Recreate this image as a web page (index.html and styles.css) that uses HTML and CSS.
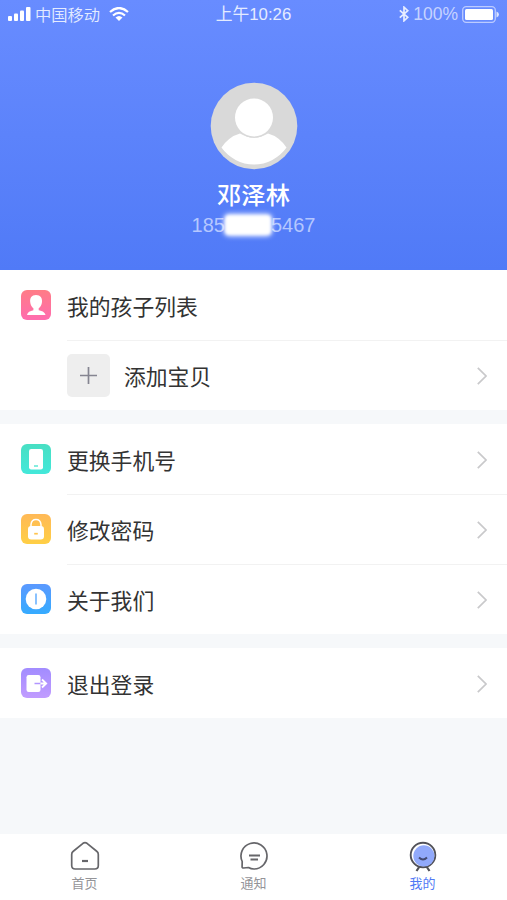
FILE: index.html
```
<!DOCTYPE html>
<html lang="zh-CN">
<head>
<meta charset="utf-8">
<title>我的</title>
<link rel="stylesheet" href="styles.css">
</head>
<body>
<div class="app">
  <header class="profile">
    <div class="status">
      <div class="status-left">
        <svg width="24" height="14" viewBox="0 0 24 14" fill="#fff"><rect x="0" y="9" width="4" height="5" rx="1"/><rect x="6" y="6.500" width="4" height="7.500" rx="1"/><rect x="12" y="3.500" width="4" height="10.500" rx="1"/><rect x="18" y="0" width="4.500" height="14" rx="1"/></svg>
        <span class="carrier">中国移动</span>
        <svg class="wifi" width="20" height="14" viewBox="0 0 20 14" fill="none" stroke="#fff" stroke-width="2.200"><path d="M1 5Q10-3 19 5"/><path d="M4 8.500Q10 3.200 16 8.500"/><path d="M6.500 10.500Q10 7.300 13.500 10.500L10 14Z" fill="#fff" stroke="none"/></svg>
      </div>
      <span class="time">上午10:26</span>
      <div class="status-right">
        <svg width="10" height="16" viewBox="0 0 10 16" fill="none" stroke="#e8eeff" stroke-width="1.700"><path d="M.8 4.300 8.800 11.300 5 14.800V1.200L8.800 4.700.8 11.700"/></svg>
        <span class="percent">100%</span>
        <svg width="37" height="17" viewBox="0 0 37 17"><rect x=".7" y=".7" width="32.600" height="15.600" rx="3.500" fill="none" stroke="#bccbff" stroke-width="1.300"/><rect x="3" y="3" width="28" height="11" rx="1.500" fill="#fff"/><path d="M34.500 5.500Q37 6.500 37 8.500T34.500 11.500Z" fill="#dce4ff"/></svg>
      </div>
    </div>
    <svg class="avatar" width="88" height="88" viewBox="0 0 88 88"><circle cx="44" cy="44" r="43.300" fill="#d9d9d9"/><path d="M11.500 65.500Q19 54.500 30 51.500Q44 60 58 51.500Q69 54.500 76.500 65.500A39.500 39.500 0 0 1 11.500 65.500Z" fill="#fff"/><circle cx="44" cy="35.500" r="20.300" fill="#d9d9d9"/><circle cx="44" cy="35.500" r="19" fill="#fff"/></svg>
    <h1 class="name">邓泽林</h1>
    <div class="phone"><span>185</span><span class="mask"></span><span>5467</span></div>
  </header>

  <main class="content">
    <section class="group">
      <div class="row">
        <svg class="icon" viewBox="0 0 30 30"><defs><linearGradient id="pink" x2="0" y2="1"><stop stop-color="#ff7c86"/><stop offset="1" stop-color="#ff6caf"/></linearGradient></defs><rect width="30" height="30" rx="6" fill="url(#pink)"/><path d="M15 5C10.500 5 8.800 8 9.200 12C9.400 15 10.800 17 12.400 18.200V20.200C9 21 6.500 22 6 25H24.500C24 22 21 21 17.700 20.200V18.200C19.400 17 20.800 15 21 12C21.400 8 19.500 5 15 5Z" fill="#fff"/></svg>
        <div class="body"><span class="label">我的孩子列表</span></div>
      </div>
      <div class="row">
        <span class="icon"></span>
        <div class="body line">
          <span class="add"><svg width="17" height="17" viewBox="0 0 17 17" stroke="#858591" stroke-width="1.700"><path d="M0 8.500H17M8.500 0V17"/></svg></span>
          <span class="label">添加宝贝</span>
          <svg class="chevron" viewBox="0 0 10 18"><path d="M.8.800 9 9 .8 17.200"/></svg>
        </div>
      </div>
    </section>

    <section class="group">
      <div class="row">
        <svg class="icon" viewBox="0 0 30 30"><defs><linearGradient id="mint" x2="0" y2="1"><stop stop-color="#48dfc3"/><stop offset="1" stop-color="#43e8da"/></linearGradient></defs><rect width="30" height="30" rx="6" fill="url(#mint)"/><rect x="8" y="5" width="14" height="20.500" rx="2.200" fill="#fff"/><path d="M13 22H17" stroke="#45e3cf" stroke-width="1.300"/></svg>
        <div class="body"><span class="label">更换手机号</span><svg class="chevron" viewBox="0 0 10 18"><path d="M.8.800 9 9 .8 17.200"/></svg></div>
      </div>
      <div class="row">
        <svg class="icon" viewBox="0 0 30 30"><defs><linearGradient id="gold" x2="0" y2="1"><stop stop-color="#ffb957"/><stop offset="1" stop-color="#ffcf45"/></linearGradient></defs><rect width="30" height="30" rx="6" fill="url(#gold)"/><path d="M10 13V10.500Q10.500 5.500 15 5.500T20 10.500V13" fill="none" stroke="#fff" stroke-width="1.500"/><rect x="7" y="12" width="16" height="13.500" rx="3.300" fill="#fff"/><path d="M13.200 19.700H16.800" stroke="#ffc44e" stroke-width="1.700"/></svg>
        <div class="body line"><span class="label">修改密码</span><svg class="chevron" viewBox="0 0 10 18"><path d="M.8.800 9 9 .8 17.200"/></svg></div>
      </div>
      <div class="row">
        <svg class="icon" viewBox="0 0 30 30"><defs><linearGradient id="blue" x2="0" y2="1"><stop stop-color="#5b99ff"/><stop offset="1" stop-color="#35abff"/></linearGradient></defs><rect width="30" height="30" rx="6" fill="url(#blue)"/><circle cx="15" cy="15" r="10.300" fill="#fff"/><path d="M15 9.500V20.500" stroke="#4ba1ff" stroke-width="1.300"/></svg>
        <div class="body line"><span class="label">关于我们</span><svg class="chevron" viewBox="0 0 10 18"><path d="M.8.800 9 9 .8 17.200"/></svg></div>
      </div>
    </section>

    <section class="group">
      <div class="row">
        <svg class="icon" viewBox="0 0 30 30"><defs><linearGradient id="violet" x2="0" y2="1"><stop stop-color="#a28cff"/><stop offset="1" stop-color="#c19cff"/></linearGradient></defs><rect width="30" height="30" rx="6" fill="url(#violet)"/><rect x="5.500" y="7" width="14" height="17" rx="2.200" fill="#fff"/><path d="M13.500 15.500H19.500" stroke="#b195ff" stroke-width="1.500"/><path d="M19.500 15.500H25M21 11.500 25.200 15.500 21 19.500" fill="none" stroke="#fff" stroke-width="1.800"/></svg>
        <div class="body"><span class="label">退出登录</span><svg class="chevron" viewBox="0 0 10 18"><path d="M.8.800 9 9 .8 17.200"/></svg></div>
      </div>
    </section>
  </main>

  <nav class="tabs">
    <a class="tab"><svg width="30" height="32" viewBox="0 0 30 32" fill="none" stroke="#66666a" stroke-width="1.700" stroke-linejoin="round"><path d="M13 2.300Q15 .9 17 2.300L27 10.500Q28.300 11.500 28.300 13.500V24.500Q28.300 28 24.800 28H5.200Q1.700 28 1.700 24.500V13.500Q1.700 11.500 3 10.500Z"/><path d="M12 20H18" stroke-width="2.200"/></svg><span>首页</span></a>
    <a class="tab"><svg width="30" height="32" viewBox="0 0 30 32" fill="none" stroke="#66666a" stroke-width="1.700" stroke-linejoin="round"><path d="M3.200 20.500A13 13 0 1 1 15 28Q12 28 9.500 26.500L4.600 27Q3 27.100 3.100 25.500Z"/><path d="M10 14.500H21M11.500 18.500H19" stroke-width="1.900"/></svg><span>通知</span></a>
    <a class="tab active"><svg width="30" height="32" viewBox="0 0 30 32" fill="none"><path d="M11.500 25.500 8.500 30M18.500 25.500 21.500 30" stroke="#515158" stroke-width="2.200"/><circle cx="15" cy="14" r="12.300" fill="#fff" stroke="#515158" stroke-width="1.900"/><circle cx="15.900" cy="14.900" r="10.600" fill="#91a9fb"/><path d="M11 16.500Q15 20.500 19 16.500" stroke="#434a72" stroke-width="1.900"/></svg><span>我的</span></a>
  </nav>
</div>
</body>
</html>
```
FILE: styles.css
```
* { box-sizing: border-box; }
body {
  margin: 0;
  font-family: "Noto Sans CJK SC", sans-serif;
  color: #333;
}
svg { display: block; flex: none; }
.app {
  display: flex;
  flex-direction: column;
  height: 900px;
  background: #f6f8fa;
}
.profile {
  display: flex;
  flex-direction: column;
  align-items: center;
  height: 270px;
  color: #fff;
  background: linear-gradient(#688cff, #507af7);
}
.status {
  display: grid;
  grid-template-columns: 1fr auto 1fr;
  align-items: center;
  width: 100%;
  height: 28px;
  padding: 0 8px;
  line-height: 20px;
  color: #e4ebff;
}
.status-left, .status-right { display: flex; align-items: center; }
.status-left { gap: 3px; }
.status-right { justify-content: flex-end; gap: 4px; }
.carrier { font-size: 16.3px; font-weight: 350; }
.wifi { margin-left: 6px; }
.time { padding-top: 2px; font-family: "Liberation Sans", "Noto Sans CJK SC", sans-serif; font-size: 16.8px; }
.percent { font-family: "Liberation Sans", sans-serif; font-size: 17.5px; color: #c6d3ff; }
.avatar { margin-top: 54px; }
.name {
  margin: 7px 0 0;
  font-size: 24.3px;
  font-weight: 500;
  line-height: 34px;
}
.phone {
  display: flex;
  align-items: center;
  height: 28px;
  font-family: "Liberation Sans", sans-serif;
  font-size: 20px;
  color: #b5c7ff;
}
.mask {
  width: 46px;
  height: 20px;
  border-radius: 4px;
  background: #fff;
  filter: blur(1.5px);
  box-shadow: 0 0 4px 1px #fff;
}
.content { display: flex; flex: 1; flex-direction: column; gap: 14px; }
.group { background: #fff; }
.row { display: flex; align-items: center; height: 70px; padding-left: 21px; }
.icon { flex: none; width: 30px; height: 30px; }
.body {
  display: flex;
  flex: 1;
  align-items: center;
  height: 70px;
  margin-left: 16px;
  padding: 1px 20px 0 0;
}
.line { padding-top: 0; border-top: 1px solid #f2f2f2; }
.label { font-size: 21.8px; line-height: 32px; }
.chevron {
  width: 10px;
  height: 18px;
  margin-left: auto;
  fill: none;
  stroke: #c9c9cb;
  stroke-width: 1.7;
}
.add {
  display: flex;
  align-items: center;
  justify-content: center;
  width: 43px;
  height: 43px;
  margin-right: 14px;
  border-radius: 5px;
  background: #eee;
}
.tabs { display: flex; height: 66px; background: #fff; }
.tab {
  display: flex;
  flex: 1;
  flex-direction: column;
  align-items: center;
  padding-top: 7px;
  font-size: 13px;
  line-height: 20px;
  color: #949498;
}
.active { color: #5179f5; }
```
